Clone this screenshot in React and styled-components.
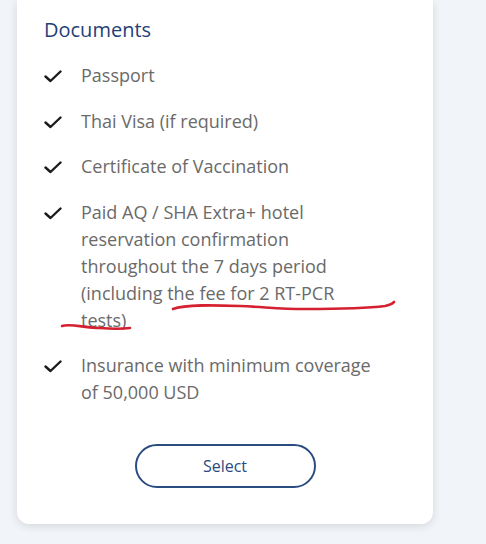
import React from 'react';
import styled, { createGlobalStyle } from 'styled-components';

const GlobalStyle = createGlobalStyle`
  body {
    margin: 0;
    background: #f1f4f8;
    font-family: "Open Sans", "Noto Sans", sans-serif;
  }
`;

const items = [
  ['Passport'],
  ['Thai Visa (if required)'],
  ['Certificate of Vaccination'],
  [
    'Paid AQ / SHA Extra+ hotel',
    'reservation confirmation',
    'throughout the 7 days period',
    '(including the fee for 2 RT-PCR',
    'tests)',
  ],
  ['Insurance with minimum coverage', 'of 50,000 USD'],
];

function Check() {
  return (
    <CheckIcon viewBox="0 0 18 13" width="18" height="13">
      <path d="M1.5 6.5 L6.5 11 L16.5 1.5" fill="none" stroke="#1b1b1b" strokeWidth="2.4" strokeLinecap="round" strokeLinejoin="round" />
    </CheckIcon>
  );
}

export default function App() {
  return (
    <Page>
      <GlobalStyle />
      <Card>
        <Title>Documents</Title>
        <List>
          {items.map((lines, i) => (
            <Item key={i}>
              <Check />
              <ItemText>
                {lines.map((l, j) => (
                  <React.Fragment key={j}>
                    {l}
                    {j < lines.length - 1 && <br />}
                  </React.Fragment>
                ))}
              </ItemText>
            </Item>
          ))}
        </List>
        <ButtonRow>
          <SelectButton>Select</SelectButton>
        </ButtonRow>
      </Card>
      <Marks viewBox="0 0 486 544" width="486" height="544">
        <path d="M173 309 C 185 304, 215 305, 240 306 C 265 307, 280 309, 305 309 C 340 309, 370 308, 385 306 C 390 305, 393 303, 394 302" />
        <path d="M62 326 C 70 323, 85 328, 100 328 C 112 329, 122 329, 130 328" />
      </Marks>
    </Page>
  );
}

const Page = styled.div`
  position: relative;
  width: 486px;
  height: 544px;
  padding: 0 53px 0 17px;
  box-sizing: border-box;
  overflow: hidden;
`;

const Card = styled.div`
  background: #ffffff;
  border-radius: 0 0 12px 12px;
  box-shadow: 0 2px 10px rgba(0, 0, 0, 0.12);
  padding: 16px 27px 36px;
`;

const Title = styled.h2`
  margin: 0 0 19px;
  font-size: 20px;
  line-height: 27px;
  font-weight: 500;
  color: #1f4178;
`;

const List = styled.ul`
  list-style: none;
  margin: 0;
  padding: 0;
  display: flex;
  flex-direction: column;
  gap: 18.5px;
`;

const Item = styled.li`
  display: flex;
  align-items: flex-start;
`;

const CheckIcon = styled.svg`
  flex: none;
  margin-top: 8px;
  margin-right: 19px;
`;

const ItemText = styled.span`
  font-size: 18px;
  line-height: 27px;
  color: #6a6a6a;
  white-space: nowrap;
`;

const ButtonRow = styled.div`
  display: flex;
  justify-content: center;
  margin-top: 38px;
`;

const SelectButton = styled.button`
  width: 181px;
  height: 44px;
  border: 2px solid #2b4c80;
  border-radius: 22px;
  background: #fff;
  color: #2b4a7f;
  font-family: "Open Sans", "Noto Sans", sans-serif;
  font-size: 16px;
  cursor: pointer;
`;

const Marks = styled.svg`
  position: absolute;
  top: 0;
  left: 0;
  pointer-events: none;
  fill: none;
  stroke: #d5202f;
  stroke-width: 2.6;
  stroke-linecap: round;
`;
